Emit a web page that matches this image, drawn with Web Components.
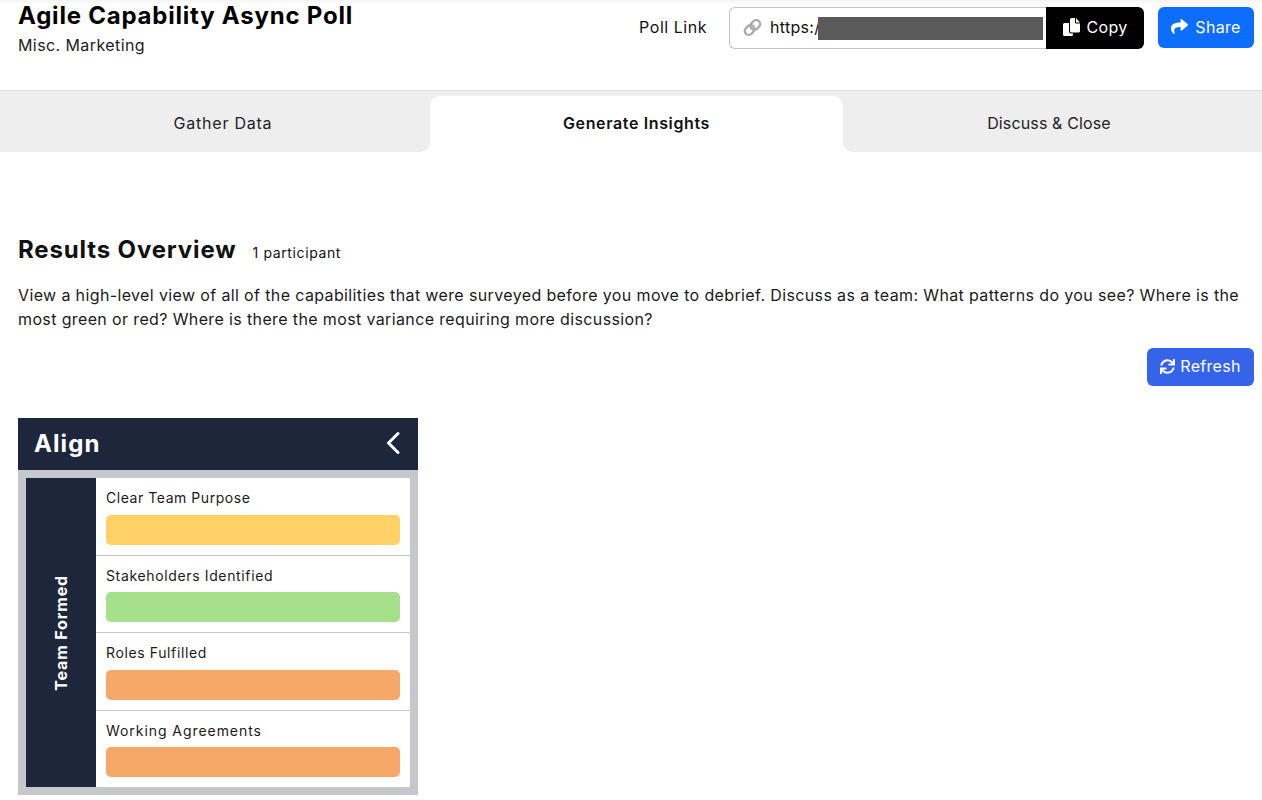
<!DOCTYPE html>
<html lang="en">
<head>
<meta charset="utf-8">
<title>Agile Capability Async Poll</title>
<style>
  html, body { margin: 0; background: #fff; }
  body { font-family: Inter, "Open Sans", sans-serif; color: #111; }
</style>
</head>
<body>
<poll-header heading="Agile Capability Async Poll" team="Misc. Marketing"></poll-header>
<poll-tabs></poll-tabs>
<results-overview>
  <capability-card name="Align" group="Team Formed">
    <capability-row label="Clear Team Purpose" color="#ffd166"></capability-row>
    <capability-row label="Stakeholders Identified" color="#a5e08a" style="--bar-gap: 6px; --label-spacing: .64px"></capability-row>
    <capability-row label="Roles Fulfilled" color="#f5a868" style="--label-spacing: .62px"></capability-row>
    <capability-row label="Working Agreements" color="#f5a868" style="--bar-gap: 6px; --label-spacing: .94px"></capability-row>
  </capability-card>
</results-overview>

<script>
const ICONS = {
  link: `<svg viewBox="0 0 20 20" fill="none" stroke="currentColor" stroke-width="2.5"><rect x="1.5" y="8.6" width="11" height="8.2" rx="4.1" transform="rotate(-45 7 12.7)"/><rect x="7.5" y="3.2" width="11" height="8.2" rx="4.1" transform="rotate(-45 13 7.3)"/></svg>`,
  copy: `<svg viewBox="0 0 17 18" fill="currentColor"><path d="M1.5 5H6v8.5a2 2 0 0 0 2 2h2v1A1.5 1.5 0 0 1 8.5 18h-7A1.5 1.5 0 0 1 0 16.5v-10A1.5 1.5 0 0 1 1.5 5z"/><path d="M8.5 0H12v4.5a1 1 0 0 0 1 1h4V13a1.5 1.5 0 0 1-1.5 1.5h-7A1.5 1.5 0 0 1 7 13V1.5A1.5 1.5 0 0 1 8.5 0z"/><path d="M13 0l4 4.5h-4z"/></svg>`,
  share: `<svg viewBox="0 0 512 512" fill="currentColor"><path d="M503.691 189.836L327.687 37.851C312.281 24.546 288 35.347 288 56.015v80.053C127.371 137.907 0 170.1 0 322.326c0 61.441 39.581 122.309 83.333 154.132 13.653 9.931 33.111-2.533 28.077-18.631C66.066 312.814 132.917 274.316 288 272.085V360c0 20.7 24.3 31.453 39.687 18.164l176.004-152c11.071-9.562 11.086-26.753 0-36.328z"/></svg>`,
  sync: `<svg viewBox="0 0 512 512" fill="currentColor"><path d="M440.65 12.57l4 82.77A247.16 247.16 0 0 0 255.83 8C134.73 8 33.91 94.92 12.29 209.82A12 12 0 0 0 24.09 224h49.05a12 12 0 0 0 11.67-9.26 175.91 175.91 0 0 1 317-56.94l-101.46-4.86a12 12 0 0 0-12.57 12v47.41a12 12 0 0 0 12 12H500a12 12 0 0 0 12-12V12a12 12 0 0 0-12-12h-47.37a12 12 0 0 0-11.98 12.57zM255.83 432a175.61 175.61 0 0 1-146-77.8l101.8 4.87a12 12 0 0 0 12.57-12v-47.4a12 12 0 0 0-12-12H12a12 12 0 0 0-12 12V500a12 12 0 0 0 12 12h47.35a12 12 0 0 0 12-12.6l-4.15-82.57A247.17 247.17 0 0 0 255.83 504c121.11 0 221.93-86.92 243.55-201.82a12 12 0 0 0-11.8-14.18h-49.05a12 12 0 0 0-11.67 9.26A175.86 175.86 0 0 1 255.83 432z"/></svg>`,
}

class ActionButton extends HTMLElement {
  constructor() {
    super()
    this.attachShadow({ mode: "open" })
  }

  connectedCallback() {
    const icon = this.getAttribute("icon")
    this.shadowRoot.innerHTML = `
      <style>
        :host {
          display: inline-flex;
          align-items: center;
          justify-content: center;
          box-sizing: border-box;
          padding-bottom: 2px;
          gap: var(--gap, 7px);
          color: #fff;
          font-size: 16px;
          letter-spacing: .3px;
          font-weight: 400;
          cursor: pointer;
        }
        .icon { display: flex; width: var(--icon-w, 17px); height: var(--icon-h, 17px); }
        svg { width: 100%; height: 100%; }
      </style>
      <span class="icon">${ICONS[icon]}</span><slot></slot>
    `
  }
}
customElements.define("action-button", ActionButton)

class PollHeader extends HTMLElement {
  constructor() {
    super()
    this.attachShadow({ mode: "open" })
  }

  connectedCallback() {
    this.shadowRoot.innerHTML = `
      <style>
        :host {
          display: flex;
          box-sizing: border-box;
          height: 91px;
          padding: 0 8px 0 18px;
          justify-content: space-between;
          border-bottom: 1px solid #ddd;
          box-shadow: inset 0 4px 4px -3px rgba(0, 0, 0, .07);
        }
        h1 {
          margin: 0;
          font-size: 24px;
          line-height: 31px;
          font-weight: 700;
          color: #000;
          letter-spacing: .78px;
        }
        .team {
          font-size: 16px;
          line-height: 28px;
          letter-spacing: .41px;
          color: #222;
        }
        .actions {
          display: flex;
          padding-top: 7px;
          align-items: flex-start;
        }
        .label {
          font-size: 16px;
          line-height: 41px;
          letter-spacing: .53px;
          margin-right: 22px;
          color: #111;
        }
        .field {
          position: relative;
          display: flex;
          align-items: center;
          box-sizing: border-box;
          width: 317px;
          height: 42px;
          padding: 0 0 2px 13px;
          border: 1px solid #c4c4c4;
          border-right: 0;
          border-radius: 6px 0 0 6px;
          color: #111;
          font-size: 16px;
          letter-spacing: .3px;
        }
        .field svg { width: 19px; height: 19px; color: #aaa; margin-right: 8px; display: block; }
        /* the redaction bar lies over the end of the address */
        .redact {
          position: absolute;
          left: 88px;
          top: 9px;
          width: 225px;
          height: 23px;
          background: #5a5a5a;
        }
        .copy {
          width: 98px;
          height: 42px;
          --icon-h: 18px;
          background: #000;
          border-radius: 0 6px 6px 0;
        }
        .share {
          width: 96px;
          height: 41px;
          margin-left: 14px;
          background: #0d6efd;
          border-radius: 6px;
        }
      </style>
      <div>
        <h1>${this.getAttribute("heading")}</h1>
        <div class="team">${this.getAttribute("team")}</div>
      </div>
      <div class="actions">
        <span class="label">Poll Link</span>
        <div class="field">${ICONS.link}<span>https:/</span><span class="redact"></span></div>
        <action-button class="copy" icon="copy">Copy</action-button>
        <action-button class="share" icon="share">Share</action-button>
      </div>
    `
  }
}
customElements.define("poll-header", PollHeader)

class PollTabs extends HTMLElement {
  constructor() {
    super()
    this.attachShadow({ mode: "open" })
    this.shadowRoot.innerHTML = `
      <style>
        :host {
          display: flex;
          height: 61px;
          background: #fff;
          font-size: 16px;
          color: #222;
        }
        .tab {
          display: flex;
          align-items: center;
          justify-content: center;
          box-sizing: border-box;
          background: #eee;
        }
        .first { width: 430px; padding-left: 16px; padding-top: 3px; border-radius: 0 0 10px 0; letter-spacing: .77px; }
        .last { flex: 1; padding-right: 7px; padding-top: 3px; border-radius: 0 0 0 10px; letter-spacing: .14px; }
        .backing { width: 413px; background: #eee; }
        .active {
          margin-top: 5px;
          height: 56px;
          padding-bottom: 2px;
          background: #fff;
          border-radius: 10px 10px 0 0;
          font-weight: 600;
          color: #111;
          letter-spacing: .63px;
        }
      </style>
      <div class="tab first">Gather Data</div>
      <div class="backing"><div class="tab active">Generate Insights</div></div>
      <div class="tab last">Discuss &amp; Close</div>
    `
  }
}
customElements.define("poll-tabs", PollTabs)

class ResultsOverview extends HTMLElement {
  constructor() {
    super()
    this.attachShadow({ mode: "open" })
    this.shadowRoot.innerHTML = `
      <style>
        :host { display: block; padding: 80px 8px 0 18px; }
        .heading { display: flex; align-items: baseline; gap: 16px; height: 36px; }
        h2 { margin: 0; font-size: 24px; line-height: 36px; font-weight: 700; color: #111; letter-spacing: .85px; }
        .count { font-size: 14px; letter-spacing: .62px; color: #111; }
        p {
          margin: 15px 0 0;
          font-size: 16px;
          line-height: 24px;
          letter-spacing: .37px;
          color: #1a1a1a;
        }
        .bar { display: flex; justify-content: flex-end; margin-top: 17px; }
        .refresh {
          width: 107px;
          height: 38px;
          --gap: 5px;
          --icon-w: 15px;
          --icon-h: 15px;
          background: #3563e9;
          border-radius: 6px;
        }
        .cards { margin-top: 32px; }
      </style>
      <div class="heading"><h2>Results Overview</h2><span class="count">1 participant</span></div>
      <p>View a high-level view of all of the capabilities that were surveyed before you move to debrief. Discuss as a team: What patterns do you see? Where is the most green or red? Where is there the most variance requiring more discussion?</p>
      <div class="bar"><action-button class="refresh" icon="sync">Refresh</action-button></div>
      <div class="cards"><slot></slot></div>
    `
  }
}
customElements.define("results-overview", ResultsOverview)

class CapabilityCard extends HTMLElement {
  constructor() {
    super()
    this.attachShadow({ mode: "open" })
  }

  connectedCallback() {
    this.shadowRoot.innerHTML = `
      <style>
        :host { display: block; width: 400px; padding-bottom: 8px; background: #c6c7cc; }
        header {
          display: flex;
          align-items: center;
          justify-content: space-between;
          box-sizing: border-box;
          height: 52px;
          padding: 0 18px 2px 16px;
          background: #1e263c;
          color: #fff;
          font-size: 24px;
          font-weight: 700;
          letter-spacing: 1.1px;
        }
        svg { width: 14px; height: 24px; display: block; }
        .body { display: flex; margin: 8px 8px 0; background: #fff; }
        .group {
          flex: 0 0 70px;
          display: flex;
          align-items: center;
          justify-content: center;
          background: #1e263c;
          color: #fff;
          font-size: 16px;
          font-weight: 700;
          letter-spacing: .85px;
        }
        .group span { writing-mode: vertical-rl; transform: rotate(180deg); }
        .rows { flex: 1; min-width: 0; }
      </style>
      <header>
        <span>${this.getAttribute("name")}</span>
        <svg viewBox="0 0 14 24" fill="none" stroke="#fff" stroke-width="3" stroke-linecap="round" stroke-linejoin="round"><path d="M12 2.5 2.5 12l9.5 9.5"/></svg>
      </header>
      <div class="body">
        <div class="group"><span>${this.getAttribute("group")}</span></div>
        <div class="rows"><slot></slot></div>
      </div>
    `
  }
}
customElements.define("capability-card", CapabilityCard)

class CapabilityRow extends HTMLElement {
  constructor() {
    super()
    this.attachShadow({ mode: "open" })
  }

  connectedCallback() {
    this.shadowRoot.innerHTML = `
      <style>
        :host {
          display: block;
          padding: 10px;
          border-top: 1px solid #c6c7cc;
        }
        :host(:first-child) { border-top: 0; }
        .label { font-size: 14px; line-height: 20px; letter-spacing: var(--label-spacing, .55px); color: #1a1a1a; }
        .bar { height: 30px; margin-top: var(--bar-gap, 7px); border-radius: 5px; background: ${this.getAttribute("color")}; }
      </style>
      <div class="label">${this.getAttribute("label")}</div>
      <div class="bar"></div>
    `
  }
}
customElements.define("capability-row", CapabilityRow)
</script>
</body>
</html>
